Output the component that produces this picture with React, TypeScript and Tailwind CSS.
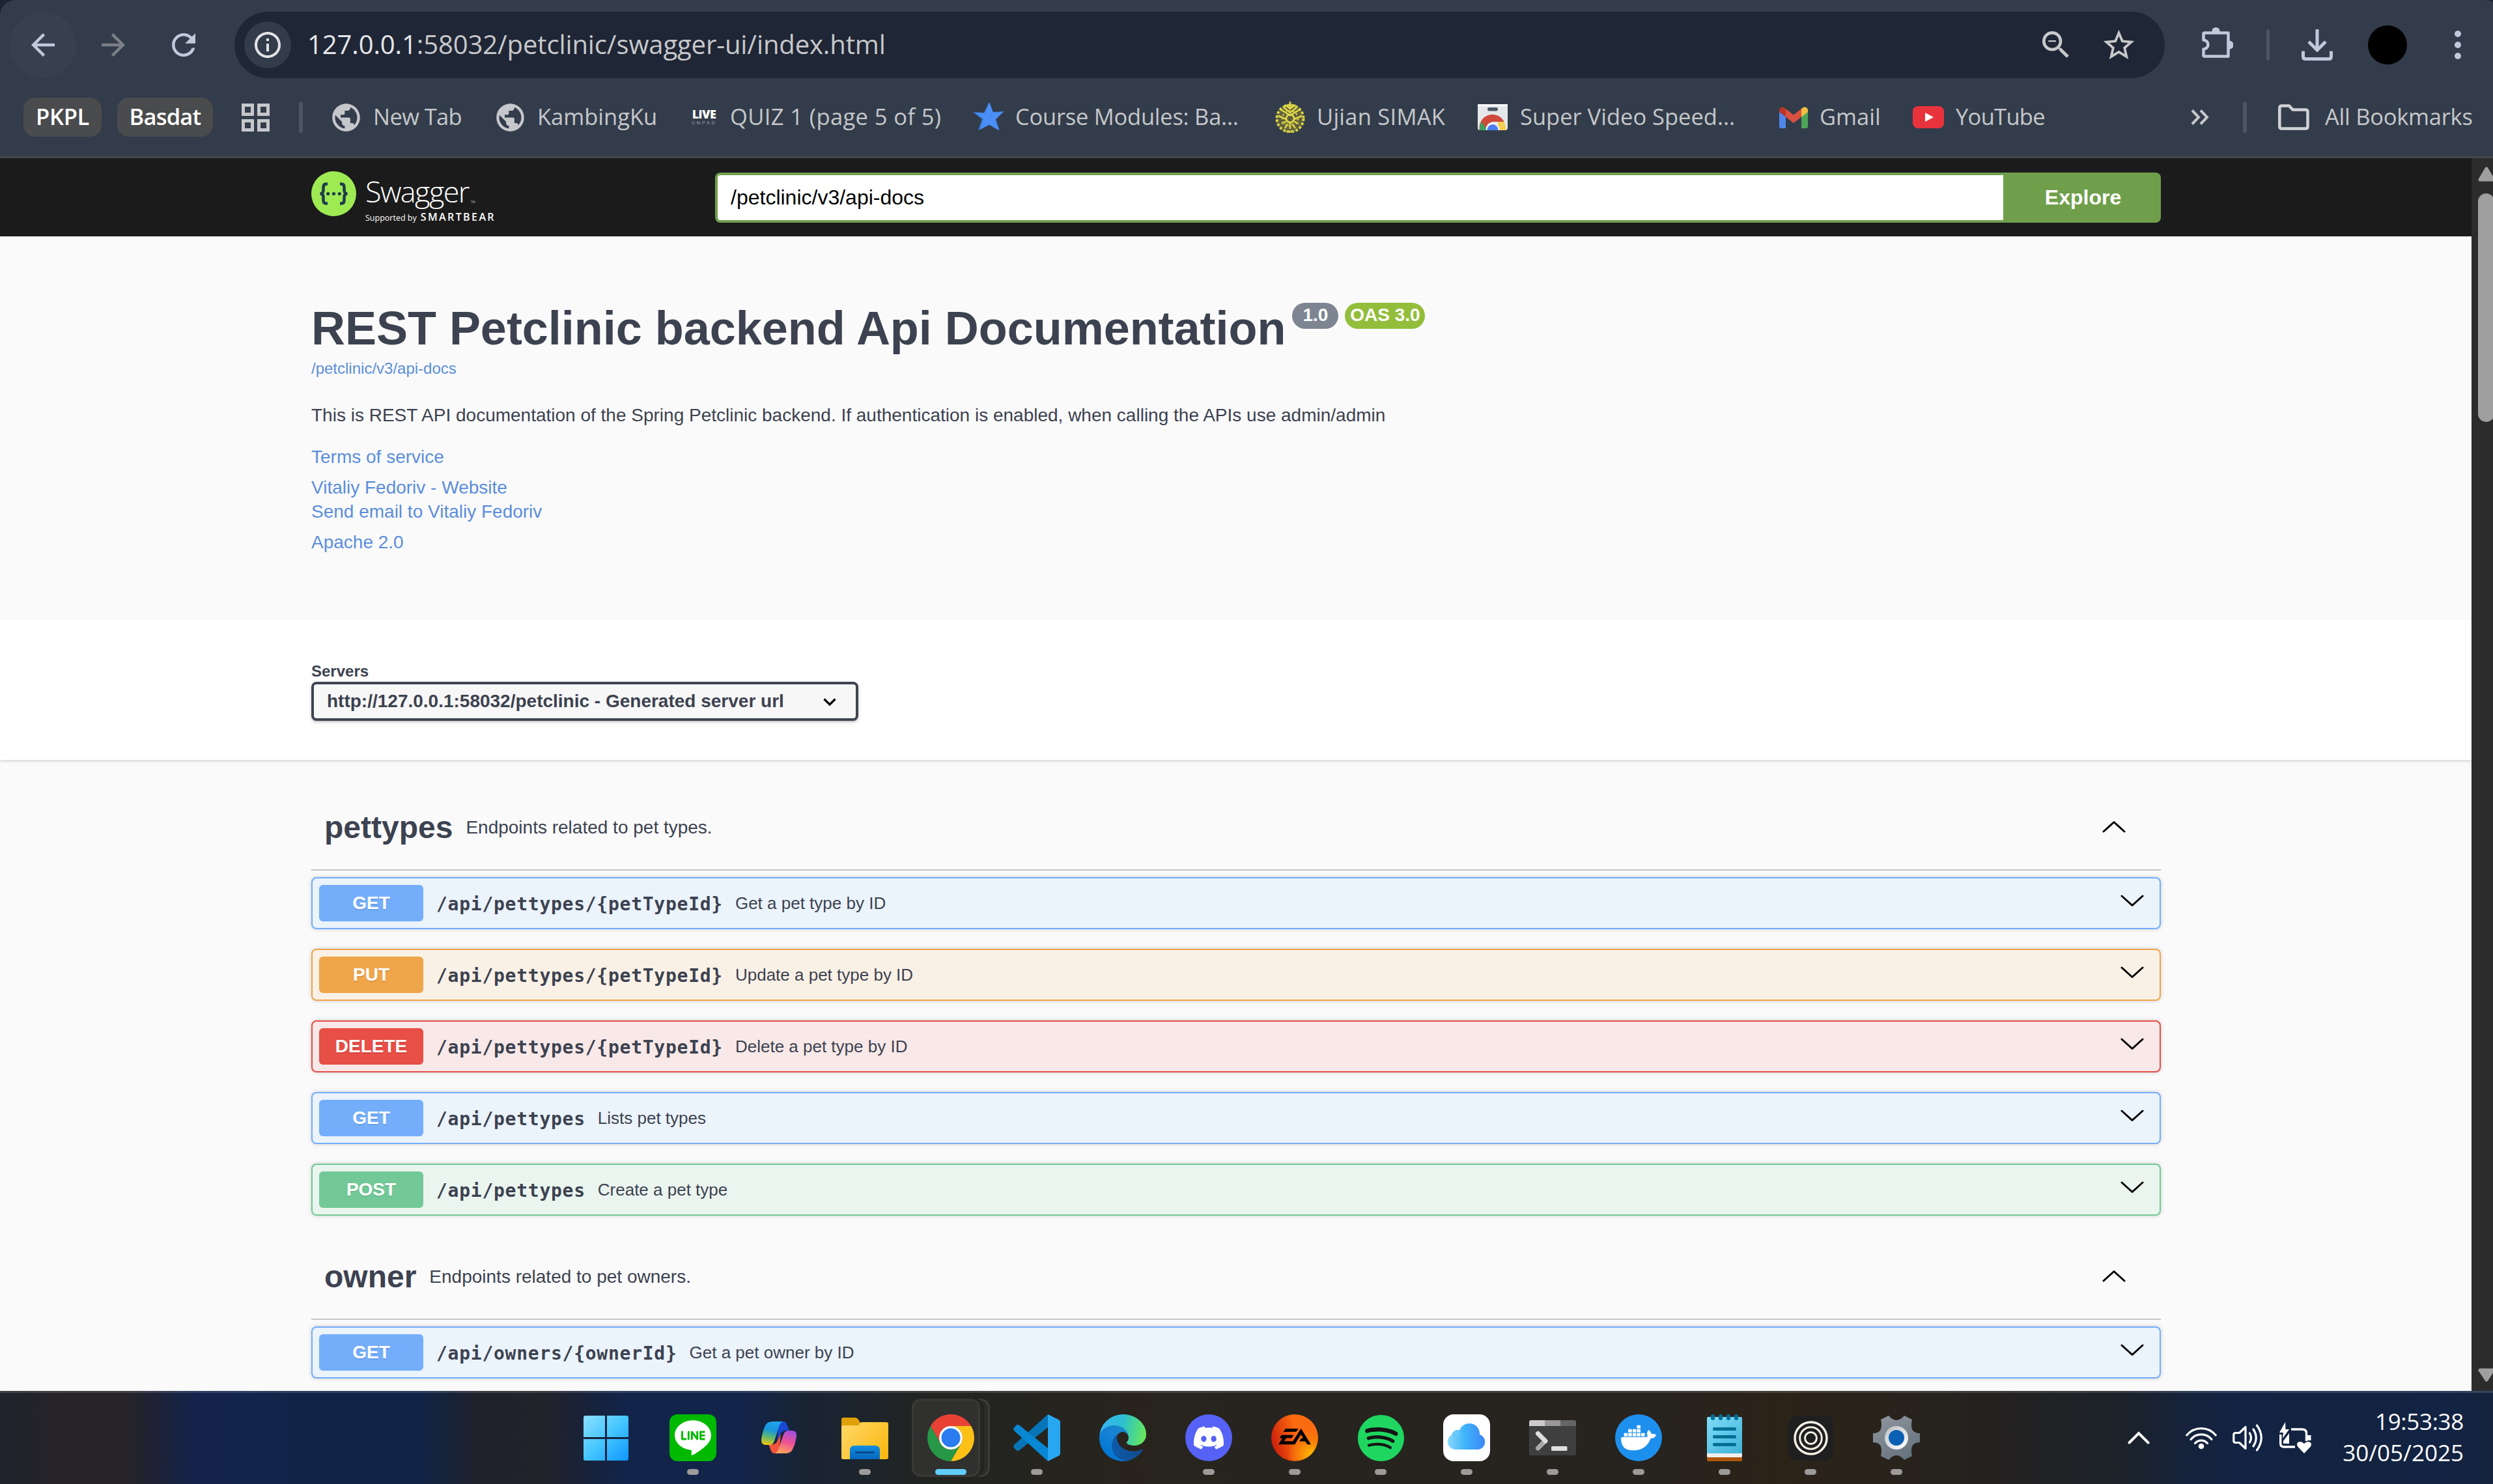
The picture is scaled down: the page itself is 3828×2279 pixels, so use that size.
import type { ReactNode } from 'react';
import {
  MdArrowBack,
  MdArrowForward,
  MdInfoOutline,
  MdOutlineZoomOut,
  MdPublic,
  MdRefresh,
  MdStarOutline,
} from 'react-icons/md';
import { SiDiscord, SiDocker, SiEa, SiLine, SiSpotify } from 'react-icons/si';

/* ---------- Browser chrome ---------- */

function ExtensionIcon() {
  return (
    <svg className="h-[48px] w-[48px]" viewBox="0 0 48 48" fill="none">
      <path
        d="M4 8.500H40.500V44.500H4Q2.500 44.500 2.500 43V33.500A7 7 0 0 0 2.500 19.500V10Q2.500 8.500 4 8.500Z"
        stroke="#c0c8db"
        strokeWidth="4.500"
        strokeLinejoin="round"
      />
      <path d="M15.500 8V5.500a6 5.500 0 0 1 12 0V8z" fill="#c0c8db" />
      <path d="M41 20.500h1.500a6 6.500 0 0 1 0 13H41z" fill="#c0c8db" />
    </svg>
  );
}

function DownloadIcon() {
  return (
    <svg className="h-[48px] w-[48px]" viewBox="0 0 48 48" fill="none" stroke="#c0c8db" strokeWidth="5">
      <path d="M24 0V32M11 19l13 13 13-13" />
      <path d="M2.500 33.500V42q0 3.500 3.500 3.500H42q3.500 0 3.500-3.500V33.500" />
    </svg>
  );
}

function Toolbar() {
  return (
    <div className="flex h-[138px] items-center">
      <div className="ml-[15px] flex h-[102px] w-[102px] items-center justify-center rounded-full bg-[#37404e]">
        <MdArrowBack className="size-[54px] text-[#c0c8db]" />
      </div>
      <div className="flex w-[114px] items-center justify-center">
        <MdArrowForward className="size-[54px] text-[#7b7f87]" />
      </div>
      <div className="flex w-[102px] items-center justify-center">
        <MdRefresh className="size-[54px] text-[#c0c8db]" />
      </div>
      <div className="ml-[27px] flex h-[102px] w-[2964px] items-center rounded-full bg-[#1f2635] pr-[42px] pl-[15px]">
        <div className="flex size-[72px] items-center justify-center rounded-full bg-[#333c4a]">
          <MdInfoOutline className="size-[48px] text-[#e2e3e6]" />
        </div>
        <div className="ml-[25px] flex-1 pb-[2px] text-[40px] tracking-[-0.11px] whitespace-nowrap text-[#c7c8cb]">
          <span className="text-[#e6e7ea]">127.0.0.1</span>:58032/petclinic/swagger-ui/index.html
        </div>
        <MdOutlineZoomOut className="size-[56px] text-[#c7c8cb]" />
        <MdStarOutline className="ml-[40px] size-[57px] text-[#c7c8cb]" />
      </div>
      <div className="ml-[57px] pb-[6px]">
        <ExtensionIcon />
      </div>
      <div className="ml-[51px] h-[48px] w-[5px] rounded-full bg-[#4d5563]" />
      <div className="ml-[49px]">
        <DownloadIcon />
      </div>
      <div className="ml-[54px] size-[60px] rounded-full bg-black" />
      <div className="ml-[73px] flex flex-col gap-[7.500px]">
        <div className="size-[9.500px] rounded-full bg-[#c0c8db]" />
        <div className="size-[9.500px] rounded-full bg-[#c0c8db]" />
        <div className="size-[9.500px] rounded-full bg-[#c0c8db]" />
      </div>
    </div>
  );
}

function LiveIcon() {
  return (
    <div className="flex w-[42px] flex-col items-center leading-none">
      <span className="text-[18px] leading-[17px] font-extrabold tracking-[-0.5px] text-white">LiVE</span>
      <span className="mt-[1px] font-['Roboto'] text-[8px] leading-[8px] tracking-[2.5px] text-[#9298a2]">UNPAD</span>
    </div>
  );
}

function CourseStarIcon() {
  return (
    <svg className="size-[48px]" viewBox="0 0 48 48">
      <path d="M25 1l6 15 17-1-13 12 6 17-16-8L8 44l6-17L0 16l17 1z" fill="#3a7bd8" />
      <path d="M25 1l6 16 15-1-12 12 5 16-14-9-14 8 5-17L3 17l15 1z" fill="#4a8ff5" />
    </svg>
  );
}

function UniversityIcon() {
  return (
    <svg className="h-[48px] w-[46px]" viewBox="0 0 46 48" fill="none">
      <ellipse cx="23" cy="26" rx="21" ry="21" fill="#5f5f3e" />
      <ellipse cx="23" cy="26" rx="20.500" ry="20.500" stroke="#d8d045" strokeWidth="4" strokeDasharray="4 2.500" />
      <path d="M23 0v9M15 5l8 6 8-6M8 12l15 9 15-9M13 9l10 8 10-8M5 22l12 5M41 22l-12 5" stroke="#e4dc4a" strokeWidth="2.500" />
      <circle cx="23" cy="26" r="6" stroke="#e4dc4a" strokeWidth="2.500" />
      <circle cx="23" cy="26" r="12" stroke="#c9c245" strokeWidth="2.500" strokeDasharray="3 3" />
      <path d="M10 34l8-4M36 34l-8-4M15 41l5-7M31 41l-5-7M23 33v9M17 46h12" stroke="#cfc845" strokeWidth="3" />
    </svg>
  );
}

function WebStoreIcon() {
  return (
    <svg className="h-[40px] w-[46px]" viewBox="0 0 46 40">
      <path d="M0 0H46V36q0 4-4 4H4q-4 0-4-4z" fill="#e6e7e9" />
      <path d="M0 0H46V3H0z" fill="#fafafa" />
      <rect x="15" y="5" width="16" height="5.500" rx="2.700" fill="#4b5563" />
      <path d="M3 40A20 20 0 0 1 40.500 27H23A13 13 0 0 0 12 40z" fill="#d04a3c" />
      <path d="M3 40A20 20 0 0 1 6 27L15 40z" fill="#3f9f5e" />
      <path d="M31 27h9.500A20 20 0 0 1 43 40H30z" fill="#f5cf54" />
      <circle cx="23" cy="39" r="10.500" fill="#f2f4f8" />
      <path d="M14.500 40a8.500 9 0 0 1 17 0z" fill="#4b7df0" />
    </svg>
  );
}

function GmailIcon() {
  return (
    <svg className="h-[33px] w-[44px]" viewBox="0 0 44 33">
      <path d="M0 7L10 14V33H3q-3 0-3-3z" fill="#4f86ec" />
      <path d="M44 7L34 14V33h7q3 0 3-3z" fill="#4fa55a" />
      <path d="M10 3L22 12.500 34 3V15.500L22 25 10 15.500z" fill="#d9503f" />
      <path d="M34 3q4-3.500 7.500-2Q44 2.300 44 5V8L34 15.500z" fill="#f3c142" />
      <path d="M10 3Q6-.5 2.500 1 0 2.300 0 5V8l10 7.500z" fill="#b8352c" />
    </svg>
  );
}

function YouTubeIcon() {
  return (
    <svg className="h-[34px] w-[48px]" viewBox="0 0 48 34">
      <rect width="48" height="34" rx="8" fill="#e8333c" />
      <path d="M19 10l13 7-13 7z" fill="#fff" />
    </svg>
  );
}

type Bookmark = { icon: ReactNode; label: string; item: string; gap: string; tracking: string };

const globe = <MdPublic className="-mx-[4px] size-[51px] text-[#c5c7cb]" />;

const bookmarks: Bookmark[] = [
  { icon: globe, label: 'New Tab', item: 'w-[252px]', gap: 'ml-[20px]', tracking: 'tracking-[-0.6px]' },
  { icon: globe, label: 'KambingKu', item: 'w-[298px]', gap: 'ml-[20px]', tracking: 'tracking-[0px]' },
  { icon: <LiveIcon />, label: 'QUIZ 1 (page 5 of 5)', item: 'w-[434px]', gap: 'ml-[19px]', tracking: 'tracking-[0.4px]' },
  { icon: <CourseStarIcon />, label: 'Course Modules: Ba...', item: 'w-[464px]', gap: 'ml-[17px]', tracking: 'tracking-[-0.25px]' },
  { icon: <UniversityIcon />, label: 'Ujian SIMAK', item: 'w-[311px]', gap: 'ml-[18px]', tracking: 'tracking-[0.25px]' },
  { icon: <WebStoreIcon />, label: 'Super Video Speed...', item: 'w-[463px]', gap: 'ml-[19px]', tracking: 'tracking-[0px]' },
  { icon: <GmailIcon />, label: 'Gmail', item: 'w-[205px]', gap: 'ml-[18px]', tracking: 'tracking-[0px]' },
  { icon: <YouTubeIcon />, label: 'YouTube', item: 'w-[427px]', gap: 'ml-[18px]', tracking: 'tracking-[-0.7px]' },
];

function BookmarkBar() {
  return (
    <div className="flex h-[84px] items-center text-[34.500px] whitespace-nowrap text-[#c5c7cb]">
      <div className="ml-[36px] flex h-[60px] w-[120px] items-center justify-center rounded-[18px] bg-[#4a4b4d] pb-[3px] font-semibold tracking-[-0.3px] text-white">
        PKPL
      </div>
      <div className="ml-[24px] flex h-[60px] w-[147px] items-center justify-center rounded-[18px] bg-[#4a4b4d] pb-[3px] font-semibold tracking-[-0.8px] text-white">
        Basdat
      </div>
      <div className="ml-[44px] grid grid-cols-2 gap-[5px]">
        {[0, 1, 2, 3].map((n) => (
          <div key={n} className="size-[19px] border-[5px] border-[#c5c7cb]" />
        ))}
      </div>
      <div className="mr-[45px] ml-[45px] h-[48px] w-[6px] rounded-full bg-[#4d5563]" />
      {bookmarks.map((b) => (
        <div key={b.label} className={`flex shrink-0 items-center ${b.item}`}>
          {b.icon}
          <span className={`pb-[3px] ${b.gap} ${b.tracking}`}>{b.label}</span>
        </div>
      ))}
      <svg className="h-[24px] w-[28px]" viewBox="0 0 28 24" fill="none" stroke="#c5c7cb" strokeWidth="4">
        <path d="M2 1.500L12 12 2 22.500M15 1.500L25 12 15 22.500" />
      </svg>
      <div className="ml-[52px] h-[48px] w-[6px] rounded-full bg-[#4d5563]" />
      <svg className="ml-[48px] h-[40px] w-[48px]" viewBox="0 0 48 40" fill="none" stroke="#d0d2d6" strokeWidth="4.500">
        <path d="M2.300 6q0-3.500 3.500-3.500H17l5.500 6H42q3.500 0 3.500 3.500V34q0 3.500-3.500 3.500H5.800q-3.500 0-3.500-3.500z" strokeLinejoin="round" />
      </svg>
      <span className="ml-[24px] pb-[3px] tracking-[-0.25px]">All Bookmarks</span>
    </div>
  );
}

/* ---------- Swagger page ---------- */

function SwaggerLogo() {
  return (
    <div className="flex">
      <svg className="mt-[20px] size-[69px]" viewBox="0 0 69 69" fill="none">
        <circle cx="34.500" cy="34.500" r="34.500" fill="#9eea53" />
        <g stroke="#1d3b4a" strokeWidth="4.500">
          <path d="M25 19.500h-2q-4.500 0-4.500 5v4.500q0 5.500-5 5.500 5 0 5 5.500v4.500q0 5 4.500 5h2" />
          <path d="M44 19.500h2q4.500 0 4.500 5v4.500q0 5.500 5 5.500-5 0-5 5.500v4.500q0 5-4.500 5h-2" />
        </g>
        <g fill="#1d3b4a">
          <circle cx="25.700" cy="34.500" r="2.600" />
          <circle cx="34.500" cy="34.500" r="2.600" />
          <circle cx="43.300" cy="34.500" r="2.600" />
        </g>
      </svg>
      <div className="ml-[14px] whitespace-nowrap text-white">
        <div className="mt-[21px] flex items-end text-[45px] leading-[60px] font-light tracking-[-1.6px]">
          Swagger
          <span className="ml-[3px] pb-[11px] text-[5px] leading-[5px] tracking-normal">TM</span>
        </div>
        <div className="mt-[1px] flex items-baseline leading-[16px]">
          <span className="text-[12.500px]">Supported by</span>
          <span className="ml-[6px] text-[16px] font-semibold tracking-[2.400px]">SMARTBEAR</span>
        </div>
      </div>
    </div>
  );
}

function TopBar() {
  return (
    <div className="flex h-[120px] bg-[#1b1b1b] pl-[478px] font-['Open_Sans',sans-serif]">
      <div className="w-[620px]">
        <SwaggerLogo />
      </div>
      <div className="mt-[22px] flex h-[77px] w-[2220px] font-['Liberation_Sans',sans-serif] text-[32px]">
        <div className="flex flex-1 items-center rounded-l-[8px] border-4 border-r-0 border-[#709f4c] bg-white pb-[2px] pl-[20px] text-black">
          /petclinic/v3/api-docs
        </div>
        <div className="flex w-[242px] items-center justify-center rounded-r-[8px] bg-[#709f4c] pb-[2px] pl-[3px] font-bold text-white">
          Explore
        </div>
      </div>
    </div>
  );
}

function Info() {
  return (
    <div className="flex h-[588px] flex-col pt-[101px] pl-[478px] text-[28px] leading-[36px] text-[#5b8edb]">
      <div className="flex items-start text-[72px] leading-[80px] font-bold tracking-[-0.03px] text-[#3c4250]">
        REST Petclinic backend Api Documentation
        <span className="mt-[1px] ml-[10px] h-[40px] w-[71px] rounded-[20px] bg-[#7d8492] text-center text-[28px] leading-[38px] text-white">
          1.0
        </span>
        <span className="mt-[1px] ml-[10px] h-[40px] w-[123px] rounded-[20px] bg-[#93be3b] text-center text-[28px] leading-[38px] text-white">
          OAS 3.0
        </span>
      </div>
      <span className="mt-[8px] text-[24px] leading-[28px]">/petclinic/v3/api-docs</span>
      <span className="mt-[38px] leading-[40px] text-[#3c4250]">
        This is REST API documentation of the Spring Petclinic backend. If authentication is enabled, when calling the
        APIs use admin/admin
      </span>
      <span className="mt-[26px]">Terms of service</span>
      <span className="mt-[11px]">Vitaliy Fedoriv - Website</span>
      <span className="mt-[1px]">Send email to Vitaliy Fedoriv</span>
      <span className="mt-[11px]">Apache 2.0</span>
    </div>
  );
}

function Servers() {
  return (
    <div className="h-[216px] bg-white pt-[65px] pl-[478px] font-bold text-[#3c4250] shadow-[0_2px_4px_rgba(0,0,0,0.15)]">
      <div className="text-[24px] leading-[30px]">Servers</div>
      <div className="mt-[1px] flex h-[60px] w-[840px] items-center justify-between rounded-[8px] border-4 border-[#3f4552] bg-[#f7f7f7] pr-[30px] pl-[20px] text-[28px] shadow-[0_2px_4px_rgba(0,0,0,0.25)]">
        http://127.0.0.1:58032/petclinic - Generated server url
        <svg className="mt-[1px] h-[12px] w-[20px]" viewBox="0 0 20 12" fill="none" stroke="#000" strokeWidth="3.200">
          <path d="M1.500 1.500L10 10l8.500-8.500" />
        </svg>
      </div>
    </div>
  );
}

type Method = 'GET' | 'PUT' | 'DELETE' | 'POST';

const methodStyles: Record<Method, { row: string; badge: string }> = {
  GET: { row: 'border-[#74aefa] bg-[#ebf3fb]', badge: 'bg-[#74aefa]' },
  PUT: { row: 'border-[#efa54a] bg-[#faf1e6]', badge: 'bg-[#efa54a]' },
  DELETE: { row: 'border-[#e74f47] bg-[#f8e8e7]', badge: 'bg-[#e74f47]' },
  POST: { row: 'border-[#72c997] bg-[#ebf5ef]', badge: 'bg-[#72c997]' },
};

function Operation({ method, path, summary }: { method: Method; path: string; summary: string }) {
  const style = methodStyles[method];
  return (
    <div
      className={`flex h-[80px] items-center rounded-[8px] border-2 pr-[24px] pl-[10px] shadow-[0_0_6px_rgba(0,0,0,0.19)] ${style.row}`}
    >
      <div
        className={`flex h-[56px] w-[160px] items-center justify-center rounded-[6px] text-[28px] font-bold text-white [text-shadow:0_2px_0_rgba(0,0,0,0.1)] ${style.badge}`}
      >
        {method}
      </div>
      <span className="mt-[3px] ml-[20px] font-['DejaVu_Sans_Mono',monospace] text-[28px] font-bold tracking-[0.740px]">{path}</span>
      <span className="ml-[19px] flex-1 text-[26px]">{summary}</span>
      <svg className="mb-[6px] h-[20px] w-[36px]" viewBox="0 0 36 20" fill="none" stroke="#000" strokeWidth="3">
        <path d="M2 2l16 14.500L34 2" strokeLinecap="round" strokeLinejoin="round" />
      </svg>
    </div>
  );
}

type Tag = { name: string; about: string; spacing: string; operations: { method: Method; path: string; summary: string }[] };

const tags: Tag[] = [
  {
    name: 'pettypes',
    about: 'Endpoints related to pet types.',
    spacing: 'mt-[38px]',
    operations: [
      { method: 'GET', path: '/api/pettypes/{petTypeId}', summary: 'Get a pet type by ID' },
      { method: 'PUT', path: '/api/pettypes/{petTypeId}', summary: 'Update a pet type by ID' },
      { method: 'DELETE', path: '/api/pettypes/{petTypeId}', summary: 'Delete a pet type by ID' },
      { method: 'GET', path: '/api/pettypes', summary: 'Lists pet types' },
      { method: 'POST', path: '/api/pettypes', summary: 'Create a pet type' },
    ],
  },
  {
    name: 'owner',
    about: 'Endpoints related to pet owners.',
    spacing: 'mt-[28px]',
    operations: [{ method: 'GET', path: '/api/owners/{ownerId}', summary: 'Get a pet owner by ID' }],
  },
];

function TagSection({ tag }: { tag: Tag }) {
  return (
    <div className={`w-[2840px] text-[#3c4250] ${tag.spacing}`}>
      <div className="flex h-[132px] items-center border-b-2 border-[#c2c4c9] pr-[54px] pl-[20px]">
        <span className="pt-[2px] text-[48px] font-bold">{tag.name}</span>
        <span className="ml-[20px] flex-1 pt-[2px] text-[28px]">{tag.about}</span>
        <svg className="mb-[1px] h-[20px] w-[36px]" viewBox="0 0 36 20" fill="none" stroke="#000" strokeWidth="3">
          <path d="M2 17L18 2.500 34 17" strokeLinecap="round" strokeLinejoin="round" />
        </svg>
      </div>
      <div className="mt-[10px] flex flex-col gap-[30px]">
        {tag.operations.map((op) => (
          <Operation key={op.method + op.path} {...op} />
        ))}
      </div>
    </div>
  );
}

function Scrollbar() {
  return (
    <div className="flex h-full w-[45px] flex-col items-center bg-[#2c2c2c]">
      <svg className="mt-[13px] h-[23px] w-[26px]" viewBox="0 0 26 23">
        <path d="M13 3L23 20H3z" fill="#9f9f9f" stroke="#9f9f9f" strokeWidth="5" strokeLinejoin="round" />
      </svg>
      <div className="mt-[18px] h-[351px] w-[25px] rounded-full bg-[#9f9f9f]" />
      <svg className="mt-auto mb-[13px] h-[22px] w-[26px]" viewBox="0 0 26 22">
        <path d="M3 3H23L13 18z" fill="#9f9f9f" stroke="#9f9f9f" strokeWidth="5" strokeLinejoin="round" />
      </svg>
    </div>
  );
}

/* ---------- Taskbar ---------- */

function WindowsIcon() {
  return (
    <svg className="mr-[4px] size-[69px]" viewBox="0 0 69 69">
      <defs>
        <linearGradient id="win" x1="0" y1="0" x2="69" y2="69" gradientUnits="userSpaceOnUse">
          <stop offset="0" stopColor="#8be0ff" />
          <stop offset="0.5" stopColor="#45c6ff" />
          <stop offset="1" stopColor="#0e96ff" />
        </linearGradient>
      </defs>
      <path d="M3 0H33V33H0V3Q0 0 3 0zM36 0H66Q69 0 69 3V33H36zM0 36H33V69H3Q0 69 0 66zM36 36H69V66Q69 69 66 69H36z" fill="url(#win)" />
    </svg>
  );
}

function LineIcon() {
  return (
    <div className="flex size-[72px] items-center justify-center rounded-[12px] bg-[#00b900]">
      <SiLine className="size-[56px] text-white" />
    </div>
  );
}

function CopilotIcon() {
  return (
    <svg className="h-[50px] w-[54px]" viewBox="0 0 54 50">
      <defs>
        <linearGradient id="cpA" x1="16" y1="0" x2="8" y2="36" gradientUnits="userSpaceOnUse">
          <stop offset="0" stopColor="#1ea4ee" />
          <stop offset="0.350" stopColor="#1897d8" />
          <stop offset="0.650" stopColor="#5bb673" />
          <stop offset="1" stopColor="#f2c80c" />
        </linearGradient>
        <linearGradient id="cpB" x1="44" y1="14" x2="32" y2="49" gradientUnits="userSpaceOnUse">
          <stop offset="0" stopColor="#a24ee0" />
          <stop offset="0.500" stopColor="#ee5291" />
          <stop offset="1" stopColor="#ffa55a" />
        </linearGradient>
      </defs>
      <path d="M27 0H34Q38 0 39.500 5L43 14H37Q31 14 29 20L24 30Z" fill="#1a48d2" />
      <path d="M27 49H20Q16 49 14.500 44L11 35H17Q23 35 25 29L30 19Z" fill="#f2543c" />
      <path d="M18 0H33Q29 2 27.500 7L20 30Q18 36 12 36H7Q0 36 0 29.500 0 24 3 14L6 6Q9 0 18 0Z" fill="url(#cpA)" />
      <path d="M36 49H21Q25 47 26.500 42L34 20Q36 14 42 14H47Q54 14 54 20.500 54 26 51 36L48 43Q45 49 36 49Z" fill="url(#cpB)" />
    </svg>
  );
}

function ExplorerIcon() {
  return (
    <svg className="mt-[2px] h-[64px] w-[72px]" viewBox="0 0 72 64">
      <defs>
        <linearGradient id="fold" x1="0" y1="8" x2="72" y2="64" gradientUnits="userSpaceOnUse">
          <stop offset="0" stopColor="#ffd868" />
          <stop offset="1" stopColor="#fbb70d" />
        </linearGradient>
        <linearGradient id="foldB" x1="0" y1="43" x2="0" y2="64" gradientUnits="userSpaceOnUse">
          <stop offset="0" stopColor="#138fdf" />
          <stop offset="1" stopColor="#0567be" />
        </linearGradient>
      </defs>
      <path d="M3 0H21Q24 0 26 3L30 9V20H0V3Q0 0 3 0z" fill="#dfa006" />
      <path d="M26 12Q29 7 32 7H69Q72 7 72 10V61Q72 64 69 64H3Q0 64 0 61V15Q0 12 3 12z" fill="url(#fold)" />
      <path d="M13 64V50Q13 43 20 43H52Q59 43 59 50V64z" fill="url(#foldB)" />
      <rect x="21" y="52" width="30" height="3" rx="1.500" fill="#0b4a8b" />
    </svg>
  );
}

function ChromeIcon() {
  return (
    <svg className="size-[72px]" viewBox="0 0 48 48">
      <path d="M24 12H44.780A24 24 0 0 0 3.220 12L13.610 30A12 12 0 0 1 24 12Z" fill="#e94235" />
      <path d="M34.390 30L24 48A24 24 0 0 0 44.780 12H24A12 12 0 0 1 34.390 30Z" fill="#fcc016" />
      <path d="M13.610 30L3.220 12A24 24 0 0 0 24 48L34.390 30A12 12 0 0 1 13.610 30Z" fill="#279847" />
      <circle cx="24" cy="24" r="12" fill="#fff" />
      <circle cx="24" cy="24" r="9.700" fill="#2b7cf0" />
    </svg>
  );
}

function CodeIcon() {
  return (
    <svg className="size-[72px]" viewBox="0 0 72 72">
      <path d="M53 0L1.500 46.500Q-1 49 1.500 52L5 55.500Q7 57 9.500 55L53 20z" fill="#0775b8" />
      <path d="M53 72L1.500 25.500Q-1 23 1.500 20L5 16.500Q7 15 9.500 17L53 52z" fill="#0887d2" />
      <path d="M53 0L70 8.500Q72 9.500 72 12V60Q72 62.500 70 63.500L53 72z" fill="#27a7f1" />
    </svg>
  );
}

function EdgeIcon() {
  return (
    <svg className="size-[72px]" viewBox="0 0 256 256">
      <defs>
        <linearGradient id="edA" x1="58" y1="177" x2="236" y2="177" gradientUnits="userSpaceOnUse">
          <stop offset="0" stopColor="#0d5cab" />
          <stop offset="1" stopColor="#124b8c" />
        </linearGradient>
        <linearGradient id="edB" x1="150" y1="90" x2="45" y2="220" gradientUnits="userSpaceOnUse">
          <stop offset="0" stopColor="#1b86c9" />
          <stop offset="0.500" stopColor="#1480d6" />
          <stop offset="1" stopColor="#0078d4" />
        </linearGradient>
        <linearGradient id="edC" x1="10" y1="70" x2="250" y2="120" gradientUnits="userSpaceOnUse">
          <stop offset="0" stopColor="#35b5f2" />
          <stop offset="0.450" stopColor="#2cc0d2" />
          <stop offset="0.800" stopColor="#50db82" />
          <stop offset="1" stopColor="#6be55c" />
        </linearGradient>
      </defs>
      <path
        d="M231.050 190.540c-3.390 1.770-6.900 3.330-10.500 4.650-11.500 4.290-23.660 6.470-35.930 6.470-47.350 0-88.600-32.570-88.600-74.370.110-11.400 6.400-21.870 16.420-27.300C69.600 101.800 58.600 146.450 58.600 172.600c0 74 68.220 81.500 82.920 81.500 7.920 0 19.870-2.310 27.100-4.580l1.300-.440a128.250 128.250 0 0 0 66.600-52.800 4 4 0 0 0-5.470-5.740z"
        fill="url(#edA)"
      />
      <path
        d="M105.730 241.420a79.200 79.200 0 0 1-22.740-21.340 80.720 80.720 0 0 1 29.450-120c3.120-1.470 8.450-4.130 15.540-4a32.350 32.350 0 0 1 25.690 13 31.880 31.880 0 0 1 6.360 18.660c0-.210 24.460-79.600-80-79.600-43.900 0-80 41.660-80 78.210a130.150 130.150 0 0 0 12.110 56 128 128 0 0 0 156.380 67.110 75.550 75.550 0 0 1-62.780-8z"
        fill="url(#edB)"
      />
      <path
        d="M152.330 148.860c-.810 1.050-3.300 2.500-3.300 5.660 0 2.610 1.700 5.120 4.720 7.230 14.380 10 41.490 8.680 41.560 8.680a59.560 59.560 0 0 0 30.270-8.350 61.380 61.380 0 0 0 30.430-52.880c.260-22.410-8-37.310-11.340-43.910C223.480 23.840 177.720 0 128 0A128 128 0 0 0 0 126.200c.480-36.540 36.800-66.050 80-66.050 3.500 0 23.460.340 42 10.070 16.340 8.580 24.900 18.940 30.850 29.210 6.180 10.670 7.280 24.150 7.280 29.520s-2.740 13.330-7.800 19.910z"
        fill="url(#edC)"
      />
    </svg>
  );
}

function DiscordIcon() {
  return (
    <div className="flex size-[72px] items-center justify-center rounded-full bg-[#5662f5]">
      <SiDiscord className="size-[46px] text-white" />
    </div>
  );
}

function EaIcon() {
  return (
    <div className="flex size-[72px] items-center justify-center rounded-full bg-[radial-gradient(circle_at_85%_85%,#fdb900_0%,#f87a08_25%,transparent_42%),linear-gradient(75deg,#c00d10_0%,#dd3a0b_25%,#fb6a10_55%,#f96d10_100%)]">
      <SiEa className="-mt-[4px] size-[50px] text-black" />
    </div>
  );
}

function SpotifyIcon() {
  return (
    <div className="flex size-[70px] items-center justify-center rounded-full bg-[#151515]">
      <SiSpotify className="size-[71px] shrink-0 text-[#1fd760]" />
    </div>
  );
}

function CloudIcon() {
  return (
    <svg className="size-[72px]" viewBox="0 0 72 72">
      <defs>
        <linearGradient id="cloud" x1="6" y1="0" x2="66" y2="0" gradientUnits="userSpaceOnUse">
          <stop offset="0" stopColor="#8bd9fb" />
          <stop offset="0.450" stopColor="#3fb4fa" />
          <stop offset="1" stopColor="#3d83f5" />
        </linearGradient>
      </defs>
      <rect width="72" height="72" rx="16" fill="#fff" />
      <path d="M18 54A12 12 0 0 1 13 31.500 9.500 9.500 0 0 1 25 24.500 16 16 0 0 1 56 31 11.800 11.800 0 0 1 54 54z" fill="url(#cloud)" />
      <path d="M13 31.500A9.500 9.500 0 0 1 25 24.500Q22 30 26 37 19 31 13 31.500z" fill="#6cc7f7" />
    </svg>
  );
}

function TerminalIcon() {
  return (
    <svg className="h-[54px] w-[72px]" viewBox="0 0 72 54">
      <rect width="72" height="54" rx="3" fill="#3f3f3f" />
      <path d="M3 0H24V9H0V3Q0 0 3 0z" fill="#cbcbcb" />
      <path d="M24 0H48V9H24z" fill="#989898" />
      <path d="M48 0H69Q72 0 72 3V9H48z" fill="#666" />
      <path d="M13.500 43L24.500 32" stroke="#a9a9a9" strokeWidth="7" strokeLinecap="round" />
      <path d="M13.500 20.500L25 32" stroke="#dedede" strokeWidth="7" strokeLinecap="round" />
      <rect x="34" y="40" width="24.500" height="7" rx="1.500" fill="#dedede" />
    </svg>
  );
}

function DockerIcon() {
  return (
    <div className="flex size-[72px] items-center justify-center rounded-full bg-[#1d90ee]">
      <SiDocker className="size-[54px] text-white" />
    </div>
  );
}

function NotepadIcon() {
  return (
    <svg className="h-[72px] w-[54px]" viewBox="0 0 54 72">
      <defs>
        <linearGradient id="note" x1="0" y1="4" x2="54" y2="60" gradientUnits="userSpaceOnUse">
          <stop offset="0" stopColor="#7fdcf8" />
          <stop offset="1" stopColor="#40b2d8" />
        </linearGradient>
      </defs>
      <path d="M0 60H54V70Q54 72 52 72H2Q0 72 0 70z" fill="#b0560d" />
      <path d="M0 58H54V64Q54 66 52 66H2Q0 66 0 64z" fill="#f1efed" />
      <path d="M2 4H52Q54 4 54 6V60H0V6Q0 4 2 4z" fill="url(#note)" />
      <g fill="#046f95">
        <rect x="6" width="6" height="9" rx="3" />
        <rect x="18" width="6" height="9" rx="3" />
        <rect x="30" width="6" height="9" rx="3" />
        <rect x="42" width="6" height="9" rx="3" />
        <rect x="9" y="20" width="36" height="5" rx="2" />
        <rect x="9" y="32" width="36" height="5" rx="2" />
        <rect x="9" y="44" width="36" height="5" rx="2" />
      </g>
    </svg>
  );
}

function RingsIcon() {
  return (
    <svg className="size-[69px]" viewBox="0 0 69 69" fill="none" stroke="#f2eee2" strokeWidth="3.500">
      <rect width="69" height="69" rx="13" fill="#1f1f20" stroke="none" />
      <circle cx="34.500" cy="34.500" r="24.500" />
      <circle cx="34.500" cy="34.500" r="16.800" strokeWidth="3" />
      <circle cx="34.500" cy="34.500" r="9" strokeWidth="3" />
    </svg>
  );
}

function SettingsIcon() {
  return (
    <svg className="size-[72px]" viewBox="-36 -36 72 72">
      <defs>
        <linearGradient id="gear" x1="-20" y1="-34" x2="20" y2="34" gradientUnits="userSpaceOnUse">
          <stop offset="0" stopColor="#8d959e" />
          <stop offset="1" stopColor="#64717c" />
        </linearGradient>
        <linearGradient id="gearRing" x1="-12" y1="-16" x2="12" y2="16" gradientUnits="userSpaceOnUse">
          <stop offset="0" stopColor="#c3c6ca" />
          <stop offset="1" stopColor="#fafafa" />
        </linearGradient>
      </defs>
      <path
        d="M-36-7Q-27-7-24-13-22-20-24-28L-12-34Q-6-27 0-27 6-27 12-34L24-28Q22-20 24-13 27-7 36-7V7Q27 7 24 13 22 20 24 28L12 34Q6 27 0 27-6 27-12 34L-24 28Q-22 20-24 13-27 7-36 7z"
        fill="url(#gear)"
      />
      <circle r="18" fill="url(#gearRing)" />
      <circle r="12" fill="#0a61b3" />
    </svg>
  );
}

type TaskItem = { name: string; icon: ReactNode; state: 'idle' | 'running' | 'active' };

const taskItems: TaskItem[] = [
  { name: 'start', icon: <WindowsIcon />, state: 'idle' },
  { name: 'line', icon: <LineIcon />, state: 'running' },
  { name: 'copilot', icon: <CopilotIcon />, state: 'idle' },
  { name: 'explorer', icon: <ExplorerIcon />, state: 'running' },
  { name: 'chrome', icon: <ChromeIcon />, state: 'active' },
  { name: 'code', icon: <CodeIcon />, state: 'running' },
  { name: 'edge', icon: <EdgeIcon />, state: 'idle' },
  { name: 'discord', icon: <DiscordIcon />, state: 'running' },
  { name: 'ea', icon: <EaIcon />, state: 'running' },
  { name: 'spotify', icon: <SpotifyIcon />, state: 'running' },
  { name: 'cloud', icon: <CloudIcon />, state: 'running' },
  { name: 'terminal', icon: <TerminalIcon />, state: 'running' },
  { name: 'docker', icon: <DockerIcon />, state: 'running' },
  { name: 'notepad', icon: <NotepadIcon />, state: 'running' },
  { name: 'rings', icon: <RingsIcon />, state: 'running' },
  { name: 'settings', icon: <SettingsIcon />, state: 'running' },
];

function TaskButton({ item }: { item: TaskItem }) {
  const active = item.state === 'active';
  return (
    <div className="relative flex h-full w-[132px] items-center justify-center">
      {active && (
        <>
          <div className="absolute top-[9px] left-[6px] h-[120px] w-[120px] rounded-[14px] border-[3px] border-white/8 bg-white/4" />
          <div className="absolute top-[9px] left-[6px] h-[120px] w-[111px] rounded-[14px] bg-[#252422]" />
          <div className="absolute top-[9px] left-[6px] h-[120px] w-[105px] rounded-[14px] border-[3px] border-[#393938] bg-[#30302f]" />
        </>
      )}
      <div className="relative">{item.icon}</div>
      {item.state === 'running' && (
        <div className="absolute top-[117px] left-[57px] h-[9px] w-[18px] rounded-full bg-[#9c9b9a]" />
      )}
      {active && <div className="absolute top-[117px] left-[42px] h-[9px] w-[48px] rounded-full bg-[#60cdff]" />}
    </div>
  );
}

function Tray() {
  return (
    <div className="flex h-full flex-1 items-center pl-[289px] text-[35px] leading-[48px] whitespace-nowrap text-white">
      <svg className="h-[22px] w-[34px]" viewBox="0 0 34 22" fill="none" stroke="#fff" strokeWidth="4">
        <path d="M2.500 18.500L17 4l14.500 14.500" strokeLinecap="round" />
      </svg>
      <svg className="ml-[55px] h-[36px] w-[48px]" viewBox="0 0 48 36" fill="none" stroke="#fff" strokeWidth="3.200" strokeLinecap="round">
        <path d="M1.800 14A29 29 0 0 1 46.200 14" />
        <path d="M8 20.500A20.500 20.500 0 0 1 40 20.500" />
        <path d="M14.500 26.500A12.500 12.500 0 0 1 33.500 26.500" />
        <circle cx="24" cy="31" r="4.300" fill="#fff" stroke="none" />
      </svg>
      <svg className="ml-[24px] h-[42px] w-[48px]" viewBox="0 0 48 42" fill="none" stroke="#fff" strokeWidth="3.200" strokeLinecap="round" strokeLinejoin="round">
        <path d="M20 4.500V37.500L10.500 28.500H5Q1.800 28.500 1.800 25.500V16.500Q1.800 13.500 5 13.500H10.500z" />
        <path d="M26.500 14Q30.500 21 26.500 28M32 8Q40.500 21 32 34M37.500 2Q51 21 37.500 40" />
      </svg>
      <svg className="ml-[24px] h-[48px] w-[49px]" viewBox="0 0 49 48" fill="none">
        <path d="M18 11H35Q41.500 11 41.500 17V29M1.700 19V33Q1.700 38 7 38H24" stroke="#fff" strokeWidth="3.400" />
        <path d="M41 20h7.500v8H41z" fill="#fff" />
        <path d="M9 0L0 16H6L5 25 15 11H9.500zM15 17V33H6V29z" fill="#fff" />
        <path d="M38 48L28.500 38Q25.500 34 28.500 31 33 28 38 33 43 28 47.500 31 50.500 34 47.500 38z" fill="#fff" />
      </svg>
      <div className="ml-auto flex flex-col items-end pr-[57px] pb-[3px]">
        <span className="tracking-[-0.3px]">19:53:38</span>
        <span>30/05/2025</span>
      </div>
    </div>
  );
}

function Taskbar() {
  return (
    <div className="h-[144px] border-t-[3px] border-white/15 bg-[linear-gradient(90deg,#20222c_0px,#272428_100px,#272428_190px,#1e2236_240px,#14234b_300px,#13244d_370px,#112448_450px,#112448_640px,#172236_695px,#20212b_735px,#22222b_840px,#1a2237_890px,#12244a_960px,#12244a_1140px,#1a2431_1240px,#1b2430_1290px,#212422_1400px,#28241d_1740px,#27241f_1900px,#27231f_2560px,#2c2318_2720px,#27231d_2960px,#252120_3050px,#1f2225_3170px,#1b2229_3260px,#16223a_3350px,#122344_3450px,#13233f_3600px,#122344_3740px,#15233c_3840px)] bg-origin-border">
      <div className="flex h-[138px] items-center pl-[866px]">
        {taskItems.map((item) => (
          <TaskButton key={item.name} item={item} />
        ))}
        <Tray />
      </div>
    </div>
  );
}

export default function App() {
  return (
    <div className="h-[2279px] w-full overflow-hidden bg-[#1c2431] font-['Open_Sans',sans-serif]">
      <div className="flex h-[2280px] w-[3840px] flex-col">
        <div className="h-[243px] rounded-t-[24px] border-b-[3px] border-[#45474a] bg-[#333c4a]">
          <Toolbar />
          <BookmarkBar />
        </div>
        <div className="flex h-[1893px]">
          <div className="w-[3795px] overflow-hidden bg-[#fafafa] font-['Liberation_Sans',sans-serif]">
            <TopBar />
            <Info />
            <Servers />
            <div className="pl-[478px]">
              {tags.map((tag) => (
                <TagSection key={tag.name} tag={tag} />
              ))}
            </div>
          </div>
          <Scrollbar />
        </div>
        <Taskbar />
      </div>
    </div>
  );
}
